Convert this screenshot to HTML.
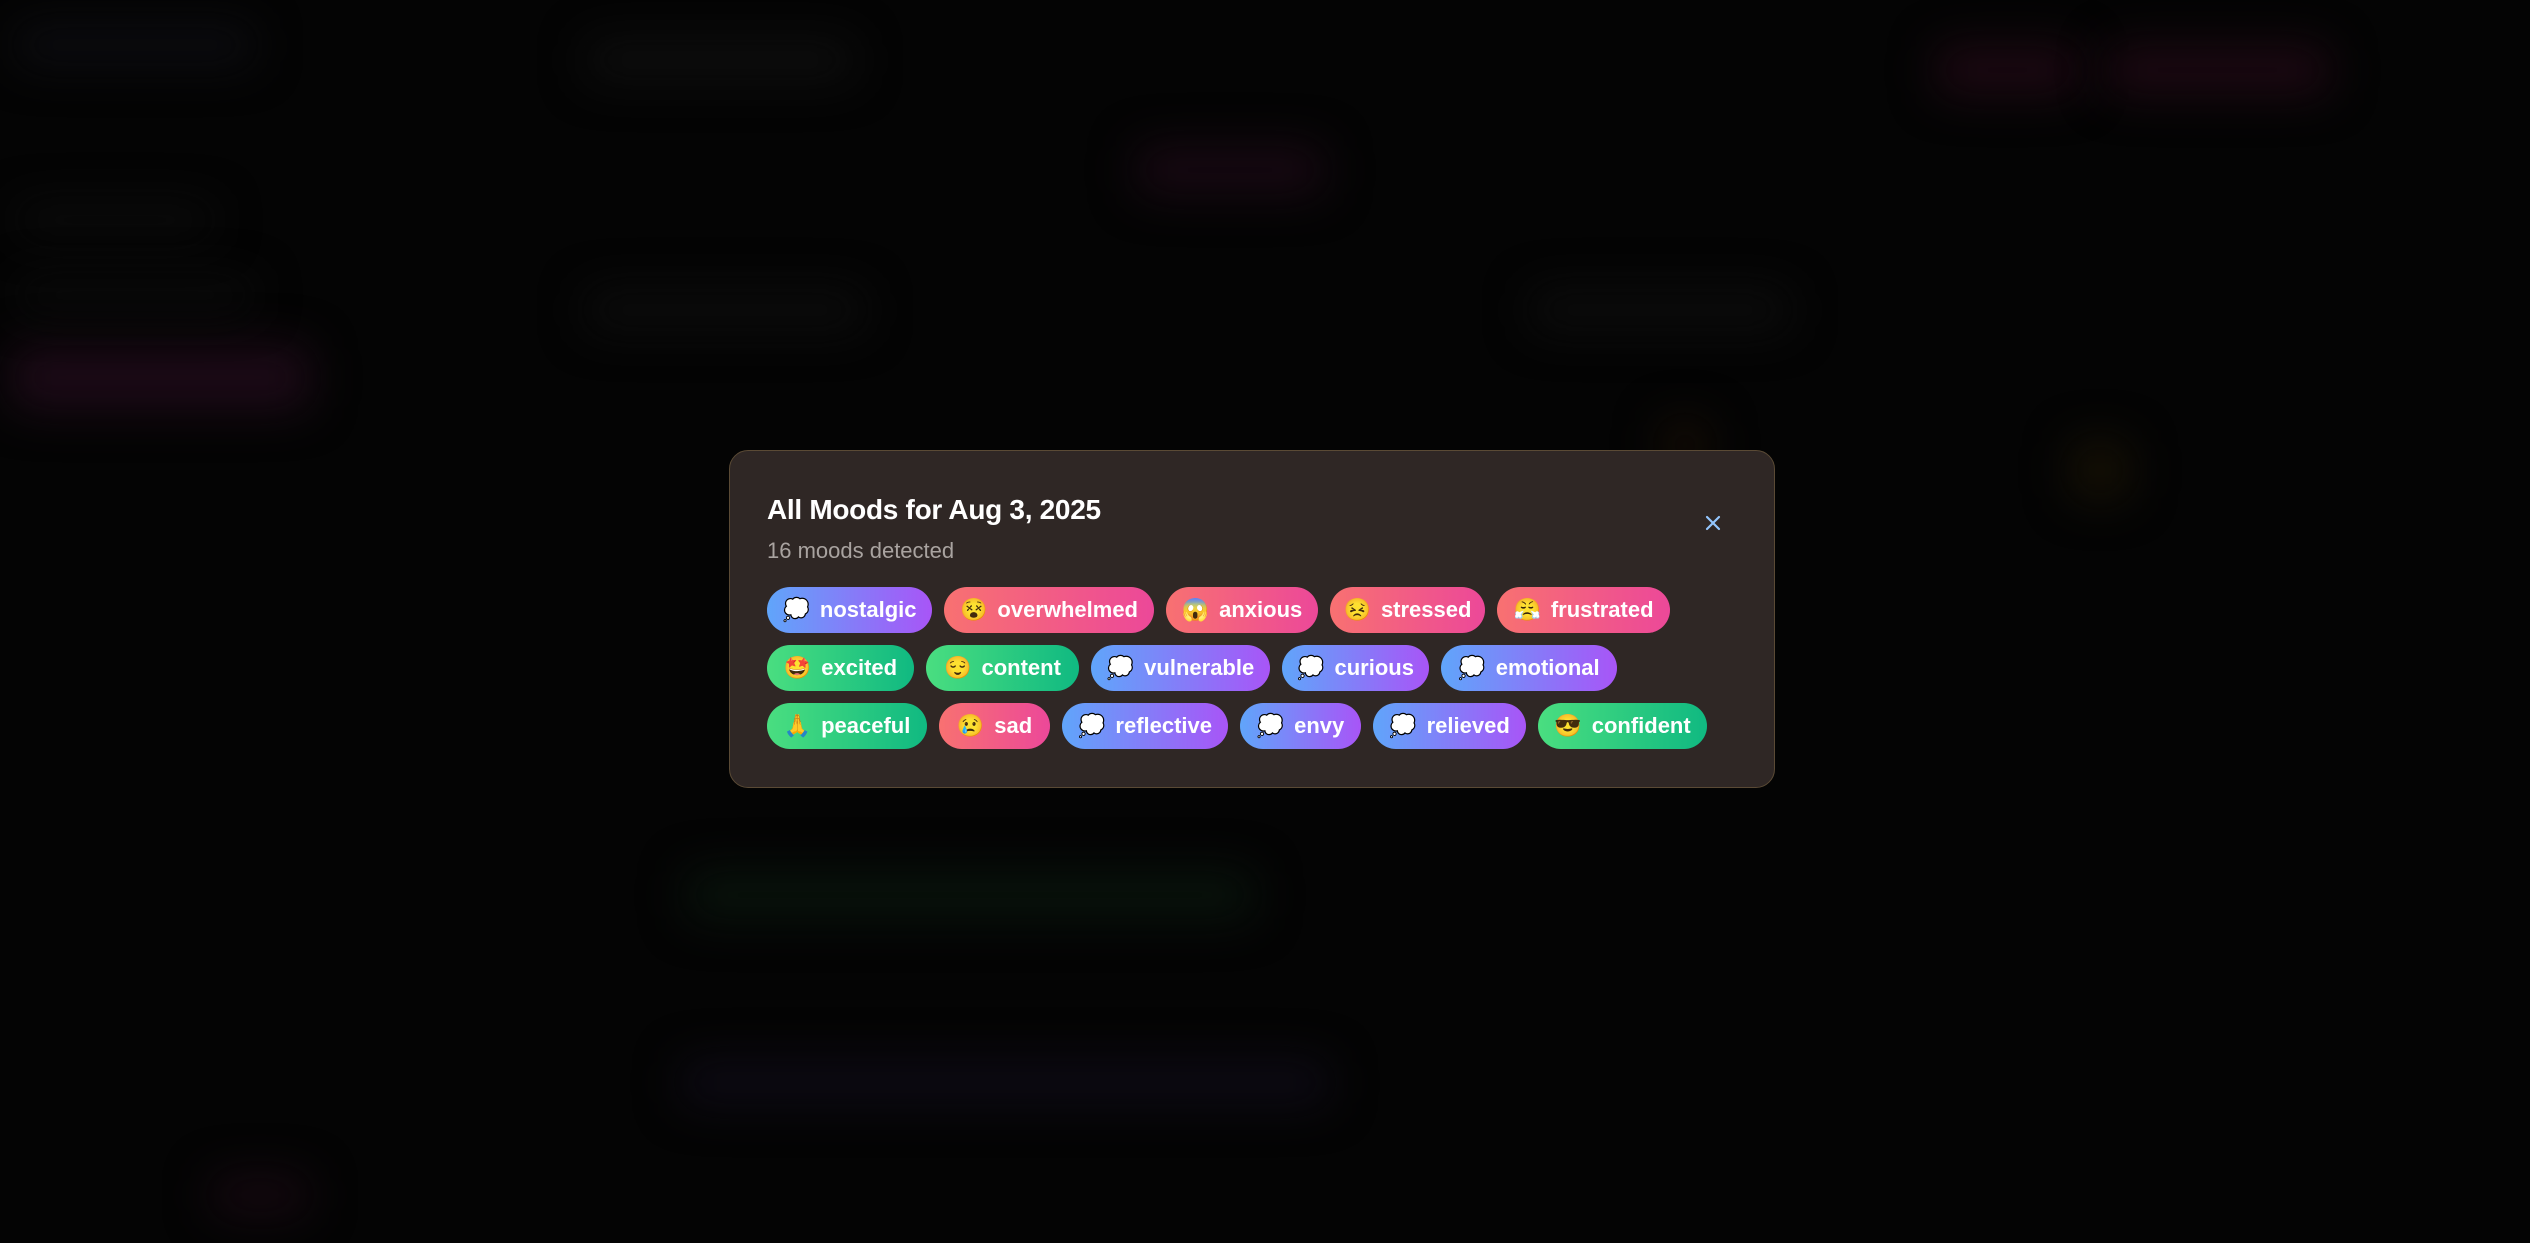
<!DOCTYPE html>
<html><head><meta charset="utf-8">
<style>
html,body{margin:0;padding:0;width:2530px;height:1243px;overflow:hidden;background:#040404;font-family:"Liberation Sans",sans-serif;}
.blob{position:absolute;filter:blur(22px);border-radius:16px;}
.modal{position:absolute;left:729px;top:450px;width:1046px;height:338px;background:#2f2725;border:1px solid #5a4a35;border-radius:19px;box-sizing:border-box;}
.title{position:absolute;left:37px;top:43px;color:#fff;font-size:28px;font-weight:bold;letter-spacing:-0.3px;}
.sub{position:absolute;left:37px;top:87px;color:#a9a3a0;font-size:22px;}
.close{position:absolute;left:971px;top:60px;width:24px;height:24px;}
.rows{position:absolute;left:37px;top:136px;}
.row{display:flex;gap:12px;margin-bottom:12px;height:46px;}
.p{height:46px;border-radius:23px;display:flex;align-items:center;justify-content:center;color:#fff;font-weight:bold;font-size:22px;white-space:nowrap;box-sizing:border-box;}
.p span{font-size:22px;margin-right:10px;font-family:"Noto Color Emoji","DejaVu Sans",sans-serif;}
.b{background:linear-gradient(90deg,#60a5fa,#a855f7);}
.r{background:linear-gradient(90deg,#f87171,#ec4899);}
.g{background:linear-gradient(90deg,#4ade80,#10b981);}
</style></head><body>
<div class="blob" style="left:10px;top:345px;width:300px;height:65px;background:#1c0a17;"></div>
<div class="blob" style="left:1935px;top:45px;width:145px;height:50px;background:#1c0812;"></div>
<div class="blob" style="left:2105px;top:45px;width:225px;height:50px;background:#1c0812;"></div>
<div class="blob" style="left:1135px;top:145px;width:190px;height:50px;background:#170812;"></div>
<div class="blob" style="left:585px;top:40px;width:270px;height:40px;background:#0e0e0e;"></div>
<div class="blob" style="left:15px;top:25px;width:240px;height:40px;background:#0c0c10;"></div>
<div class="blob" style="left:15px;top:205px;width:200px;height:30px;background:#0b0b0b;"></div>
<div class="blob" style="left:15px;top:280px;width:240px;height:30px;background:#0b0b0b;"></div>
<div class="blob" style="left:585px;top:290px;width:280px;height:40px;background:#0c0c0c;"></div>
<div class="blob" style="left:1530px;top:290px;width:260px;height:40px;background:#0c0c0c;"></div>
<div class="blob" style="left:685px;top:870px;width:570px;height:50px;background:#08120b;"></div>
<div class="blob" style="left:680px;top:1060px;width:650px;height:45px;background:#0d0a14;"></div>
<div class="blob" style="left:210px;top:1175px;width:100px;height:40px;background:#150810;"></div>
<div class="blob" style="left:2070px;top:440px;width:60px;height:60px;background:#151005;"></div>
<div class="blob" style="left:1660px;top:420px;width:50px;height:50px;background:#140c05;"></div>

<div class="modal">
  <div class="title">All Moods for Aug 3, 2025</div>
  <div class="sub">16 moods detected</div>
  <svg class="close" viewBox="0 0 24 24"><path d="M6 6L18 18M18 6L6 18" stroke="#93c5fd" stroke-width="2.2" stroke-linecap="round"/></svg>
  <div class="rows">
    <div class="row">
      <div class="p b" style="width:165px"><span>💭</span>nostalgic</div>
      <div class="p r" style="width:210px"><span>😵</span>overwhelmed</div>
      <div class="p r" style="width:152px"><span>😱</span>anxious</div>
      <div class="p r" style="width:155px"><span>😣</span>stressed</div>
      <div class="p r" style="width:173px"><span>😤</span>frustrated</div>
    </div>
    <div class="row">
      <div class="p g" style="width:147px"><span>🤩</span>excited</div>
      <div class="p g" style="width:153px"><span>😌</span>content</div>
      <div class="p b" style="width:179px"><span>💭</span>vulnerable</div>
      <div class="p b" style="width:147px"><span>💭</span>curious</div>
      <div class="p b" style="width:176px"><span>💭</span>emotional</div>
    </div>
    <div class="row">
      <div class="p g" style="width:160px"><span>🙏</span>peaceful</div>
      <div class="p r" style="width:111px"><span>😢</span>sad</div>
      <div class="p b" style="width:166px"><span>💭</span>reflective</div>
      <div class="p b" style="width:121px"><span>💭</span>envy</div>
      <div class="p b" style="width:153px"><span>💭</span>relieved</div>
      <div class="p g" style="width:169px"><span>😎</span>confident</div>
    </div>
  </div>
</div>
</body></html>
